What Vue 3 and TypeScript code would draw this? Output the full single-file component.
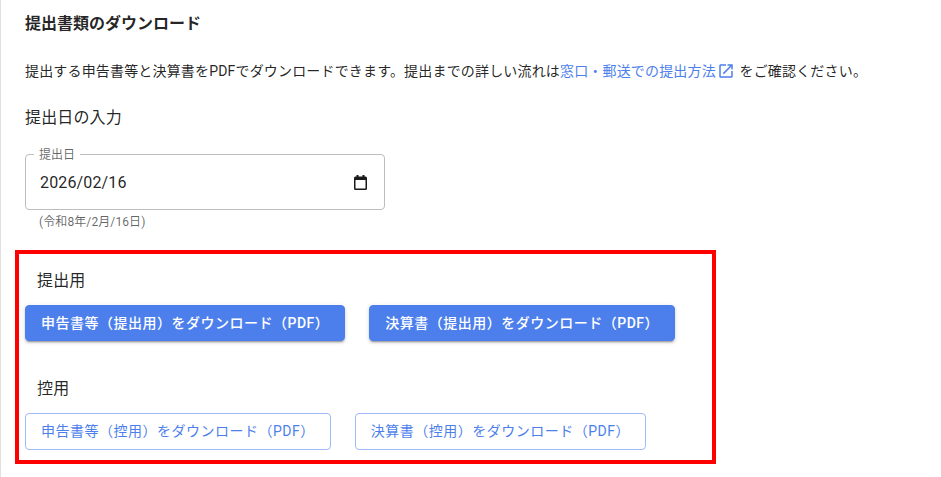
<template>
  <div class="page">
    <h2 class="title">提出書類のダウンロード</h2>
    <p class="desc">
      提出する申告書等と決算書をPDFでダウンロードできます。提出までの詳しい流れは<a class="link" href="#">窓口・郵送での提出方法<svg class="ext" viewBox="0 0 24 24"><path d="M19 19H5V5h7V3H5c-1.11 0-2 .9-2 2v14c0 1.1.89 2 2 2h14c1.1 0 2-.9 2-2v-7h-2v7zM14 3v2h3.59l-9.83 9.83 1.41 1.41L19 6.41V10h2V3h-7z" /></svg></a> をご確認ください。
    </p>
    <h3 class="sub">提出日の入力</h3>

    <div class="field">
      <fieldset class="outline"><legend>提出日</legend></fieldset>
      <span class="value">2026/02/16</span>
      <svg class="cal" viewBox="0 0 13 15">
        <path d="M2.500 0h2v1.500h4V0h2v1.500h1A1.500 1.500 0 0 1 13 3v10.500a1.500 1.500 0 0 1-1.500 1.500h-10A1.500 1.500 0 0 1 0 13.500V3a1.500 1.500 0 0 1 1.500-1.500h1zM1.500 5v8.500h10V5z" />
      </svg>
    </div>
    <p class="helper">(令和8年/2月/16日)</p>

    <div class="downloads">
      <div class="marker"></div>
      <section v-for="group in groups" :key="group.label" class="group">
        <h3 class="group-label">{{ group.label }}</h3>
        <div class="buttons">
          <button v-for="name in group.buttons" :key="name" class="btn" :class="group.kind">
            {{ name }}をダウンロード（PDF）
          </button>
        </div>
      </section>
    </div>
  </div>
</template>

<script setup lang="ts">
const groups = [
  { label: '提出用', kind: 'contained', buttons: ['申告書等（提出用）', '決算書（提出用）'] },
  { label: '控用', kind: 'outlined', buttons: ['申告書等（控用）', '決算書（控用）'] },
]
</script>

<style>
html,
body {
  background: #fff;
}
</style>

<style scoped>
.page {
  width: 941px;
  height: 477px;
  box-sizing: border-box;
  overflow: hidden;
  border-left: 1px solid #e0e0e0;
  padding-left: 24px;
  font-family: Roboto, 'Noto Sans CJK JP', sans-serif;
  color: rgba(0, 0, 0, 0.87);
  background: #fff;
}
.title {
  margin: 0;
  padding-top: 12px;
  font-size: 16px;
  line-height: 24px;
  font-weight: 700;
}
.desc {
  margin: 0;
  padding-top: 24px;
  font-size: 14px;
  line-height: 22px;
  letter-spacing: 0.17px;
  white-space: nowrap;
}
.link {
  color: #4d7fec;
  text-decoration: none;
}
.ext {
  width: 18px;
  height: 18px;
  margin-left: 1px;
  margin-right: 1px;
  vertical-align: -4px;
  fill: #4d7fec;
}
.sub {
  margin: 0;
  padding-top: 24px;
  font-size: 16px;
  font-weight: 400;
  line-height: 24px;
  letter-spacing: 0.15px;
}
.field {
  position: relative;
  display: flex;
  align-items: center;
  justify-content: space-between;
  box-sizing: border-box;
  width: 360px;
  height: 56px;
  margin-top: 24px;
  padding: 0 18px 0 15px;
}
.outline {
  position: absolute;
  inset: -6px 0 0;
  margin: 0;
  padding: 0 8px;
  border: 1px solid #bdbdbd;
  border-radius: 4px;
}
.outline legend {
  padding: 2px 5px 0;
  font-size: 12px;
  line-height: 11px;
  color: rgba(0, 0, 0, 0.6);
}
.value {
  font-size: 16px;
  letter-spacing: 0.15px;
}
.cal {
  width: 13px;
  height: 15px;
  fill: #1a1a1a;
}
.helper {
  margin: 0;
  padding: 4px 0 0 14px;
  font-size: 12px;
  line-height: 16px;
  letter-spacing: 0.1px;
  color: rgba(0, 0, 0, 0.6);
}
.downloads {
  position: relative;
  padding-top: 39px;
}
.marker {
  position: absolute;
  left: -10px;
  top: 20px;
  width: 701px;
  height: 214px;
  box-sizing: border-box;
  border: 4px solid #f00;
  pointer-events: none;
}
.group + .group {
  margin-top: 36px;
}
.group-label {
  margin: 0;
  padding-left: 12px;
  font-size: 16px;
  font-weight: 400;
  line-height: 24px;
  letter-spacing: 0.15px;
}
.buttons {
  display: flex;
  gap: 24px;
  margin-top: 12px;
}
.btn {
  box-sizing: border-box;
  padding: 0 15px;
  height: 36px;
  font-family: inherit;
  font-size: 14px;
  letter-spacing: 0.5px;
  border-radius: 4px;
  white-space: nowrap;
}
.btn.contained {
  padding-bottom: 2px;
  font-weight: 500;
  color: #fff;
  background: #4d7fec;
  border: 1px solid #4d7fec;
  box-shadow: 0 3px 1px -2px rgba(0, 0, 0, 0.2), 0 2px 2px 0 rgba(0, 0, 0, 0.14), 0 1px 5px 0 rgba(0, 0, 0, 0.12);
}
.btn.outlined {
  height: 37px;
  padding-bottom: 3px;
  font-weight: 400;
  color: #4d7fec;
  background: #fff;
  border: 1px solid #a0bbf5;
}
</style>
